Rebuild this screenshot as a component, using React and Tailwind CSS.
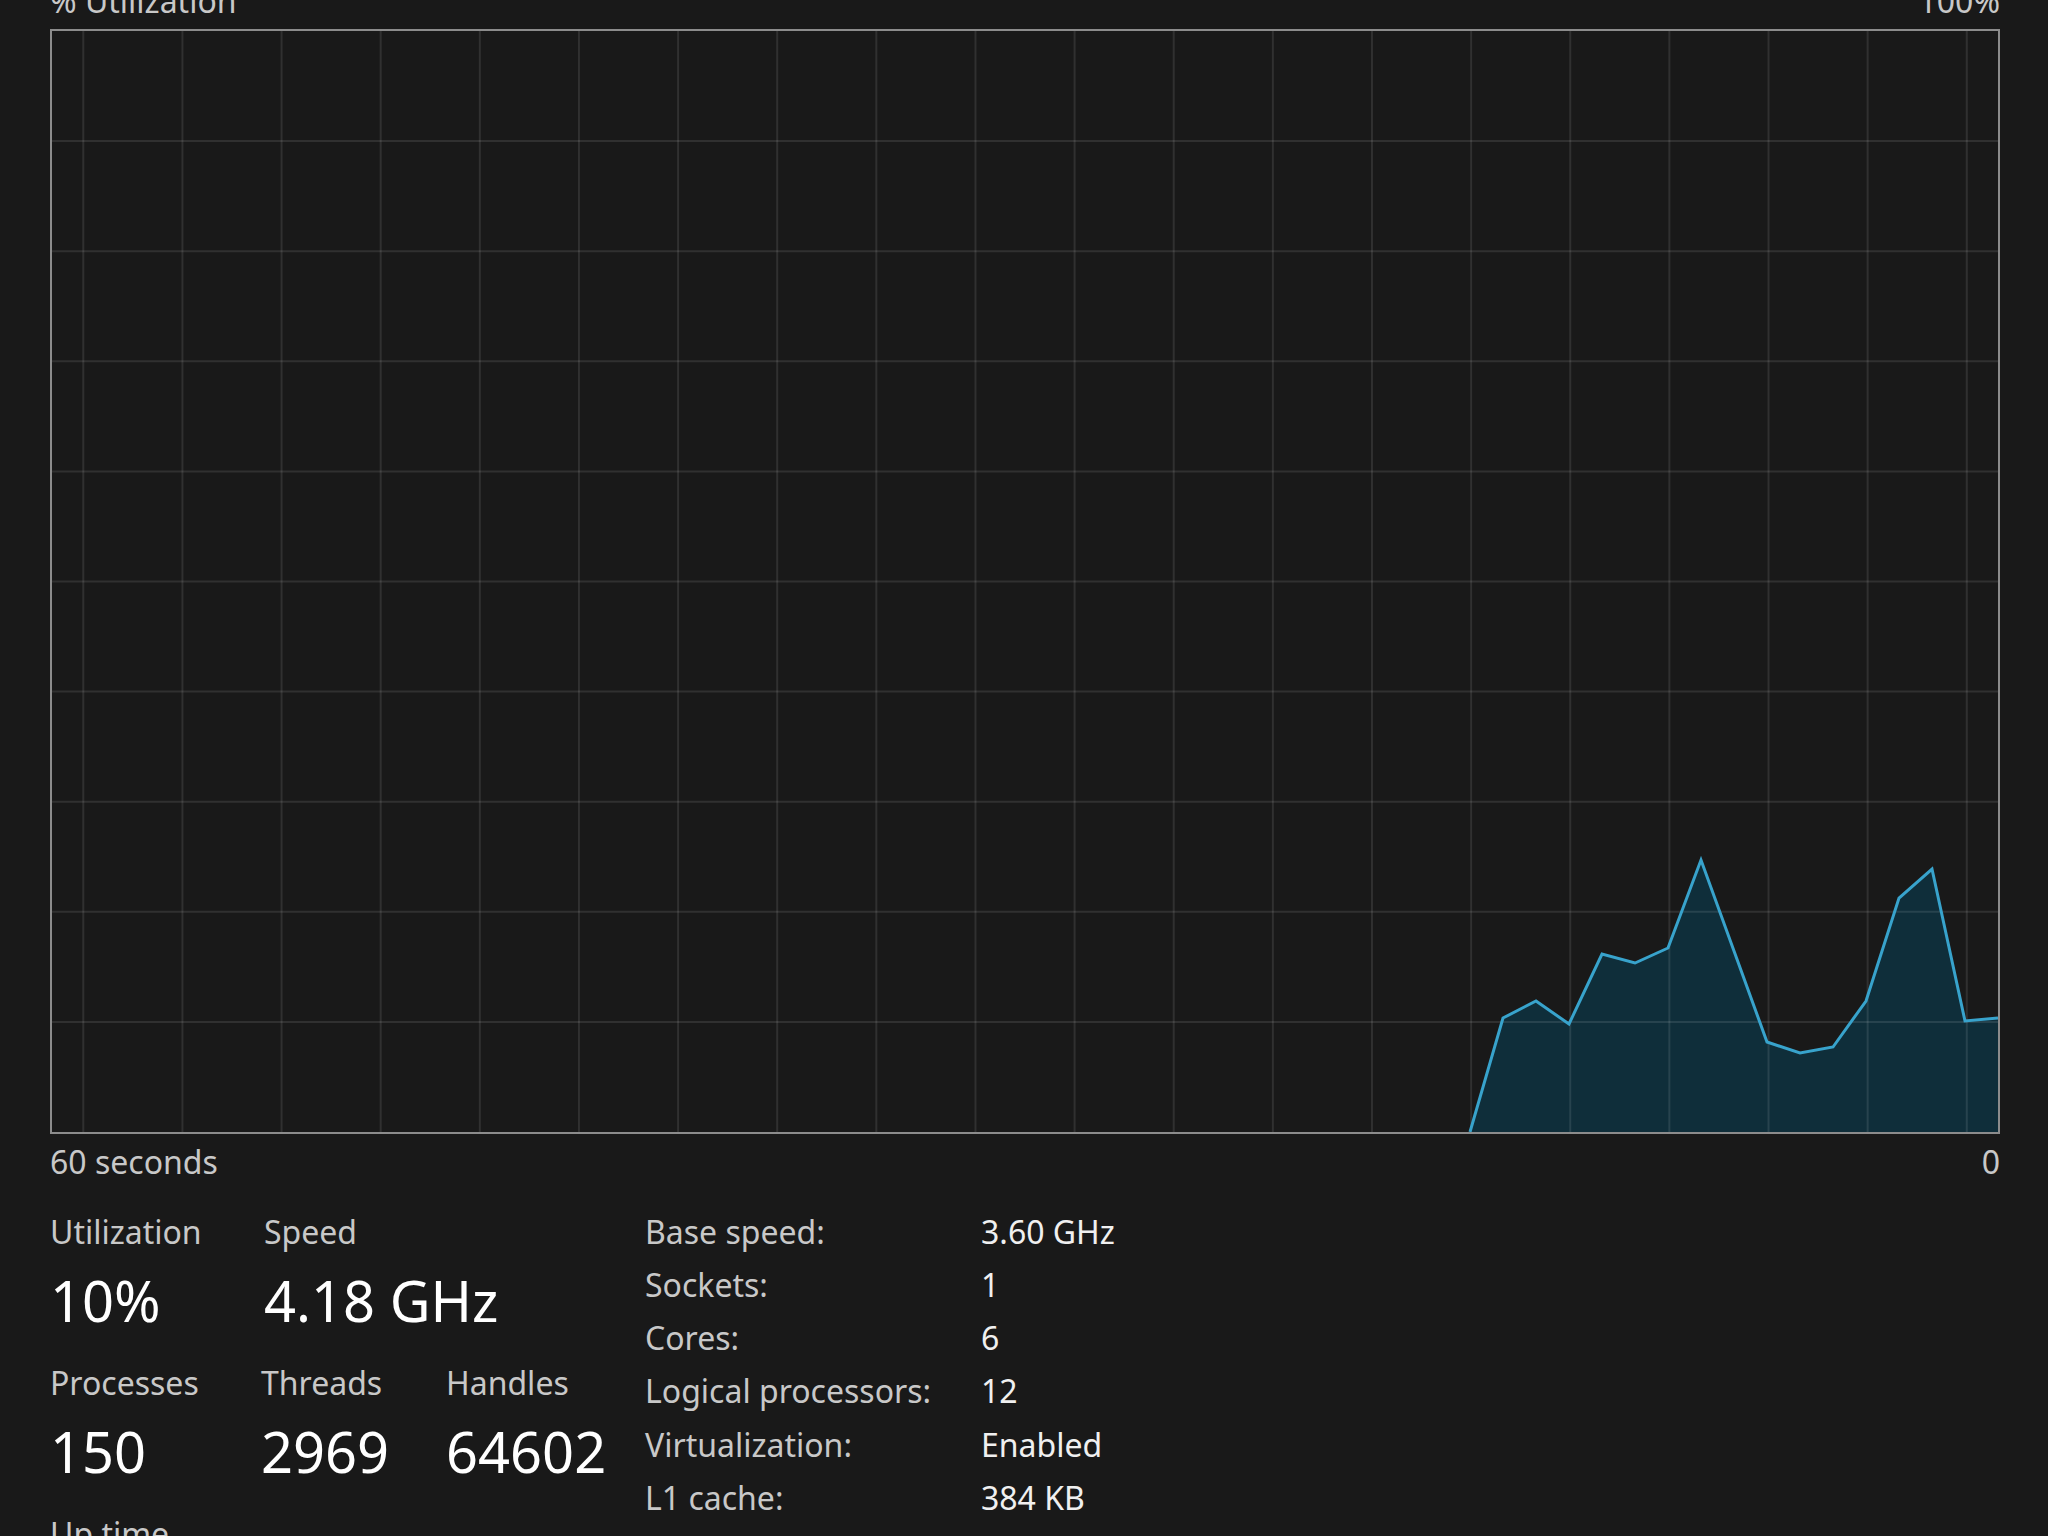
import React from "react";

function Stat({ w, label, value }) {
  return (
    <div className={w}>
      <div className="text-[32px] leading-[32px] text-[#c8c8c8] whitespace-nowrap">{label}</div>
      <div className="mt-[24px] text-[56px] leading-[56px] text-white whitespace-nowrap">{value}</div>
    </div>
  );
}

const rows = [
  ["Base speed:", "3.60 GHz"],
  ["Sockets:", "1"],
  ["Cores:", "6"],
  ["Logical processors:", "12"],
  ["Virtualization:", "Enabled"],
  ["L1 cache:", "384 KB"],
  ["L2 cache:", "3.0 MB"],
  ["L3 cache:", "32.0 MB"],
];

export default function App() {
  const W = 1946;
  const H = 1101;
  const gridV = Array.from({ length: 20 }, (_, i) => 31.3 + 99.13 * i);
  const gridH = Array.from({ length: 9 }, (_, i) => 110.1 * (i + 1));
  const ys = [1101, 987, 970, 993, 923, 932, 917, 829, 920, 1011, 1022, 1016, 970, 867, 838, 990, 987];
  const pts = ys.map((y, i) => [W - 33 * (ys.length - 1 - i), y]);
  const line = pts.map((p, i) => (i === 0 ? "M" : "L") + p[0] + "," + p[1]).join(" ");
  const area = line + ` L${W},${H} L${pts[0][0]},${H} Z`;

  return (
    <div className="w-[2048px] h-[1536px] overflow-hidden bg-[#191919] text-[#c8c8c8] font-['Noto_Sans',sans-serif]">
      <div className="ml-[50px] w-[1950px]">
        <div className="-mt-[14px] flex justify-between text-[32px] leading-[29px]">
          <span>% Utilization</span>
          <span>100%</span>
        </div>
        <div className="mt-[14px] h-[1105px] border-2 border-[#8c8c8c]">
          <svg className="block w-full h-full" viewBox={`0 0 ${W} ${H}`} preserveAspectRatio="none">
            <path d={area} fill="#0f2e3a" />
            {gridV.map((x) => (
              <line key={"v" + x} x1={x} y1={0} x2={x} y2={H} stroke="rgba(255,255,255,0.1)" strokeWidth="2" />
            ))}
            {gridH.map((y) => (
              <line key={"h" + y} x1={0} y1={y} x2={W} y2={y} stroke="rgba(255,255,255,0.1)" strokeWidth="2" />
            ))}
            <path d={line} fill="none" stroke="#38a3cc" strokeWidth="3" strokeLinejoin="miter" />
          </svg>
        </div>
        <div className="mt-[12px] flex justify-between text-[32px] leading-[32px]">
          <span>60 seconds</span>
          <span>0</span>
        </div>
        <div className="mt-[27px] flex">
          <div className="w-[595px] pt-[11px]">
            <div className="flex">
              <Stat w="w-[214px]" label="Utilization" value="10%" />
              <Stat w="" label="Speed" value="4.18 GHz" />
            </div>
            <div className="mt-[39px] flex">
              <Stat w="w-[211px]" label="Processes" value="150" />
              <Stat w="w-[185px]" label="Threads" value="2969" />
              <Stat w="" label="Handles" value="64602" />
            </div>
            <div className="mt-[39px]">
              <Stat w="" label="Up time" value="0:02:14:37" />
            </div>
          </div>
          <div className="grid grid-cols-[336px_auto] text-[32px] leading-[53px]">
            {rows.map(([k, v]) => (
              <React.Fragment key={k}>
                <div className="text-[#c8c8c8] whitespace-nowrap">{k}</div>
                <div className="text-[#f0f0f0] whitespace-nowrap">{v}</div>
              </React.Fragment>
            ))}
          </div>
        </div>
      </div>
    </div>
  );
}
